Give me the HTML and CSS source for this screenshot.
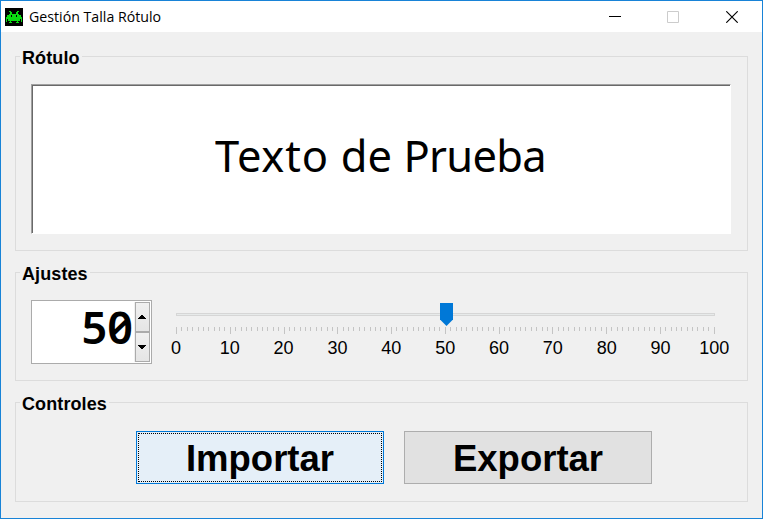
FILE: index.html
```html
<!DOCTYPE html>
<html lang="es">
<head>
<meta charset="utf-8">
<title>Gestión Talla Rótulo</title>
<link rel="stylesheet" href="styles.css">
</head>
<body>
<div class="window">
  <header class="titlebar">
    <svg class="app-icon" width="18" height="18" viewBox="0 0 18 18" shape-rendering="crispEdges">
      <rect width="18" height="18" fill="#000"/>
      <path fill="#0bdc12" d="M4 3h2v1h1v2h4V4h1V3h2v1h-1v2h1v1h2v2h1v5h-1v-3h-1v2h-2v1h1v1h-3v-1h1v-1H6v1h1v1H4v-1h1v-1H3v-2H2v3H1V9h1V7h2V6h1V4H4z"/>
      <path fill="#000" d="M6 7h1v2H6zM11 7h1v2h-1z"/>
    </svg>
    <span class="title">Gestión Talla Rótulo</span>
    <nav class="window-buttons">
      <svg width="12" height="12" viewBox="0 0 12 12"><path d="M0 5.5h12" stroke="#000"/></svg>
      <svg width="12" height="12" viewBox="0 0 12 12"><path d="M.5.5h11v11H.5z" fill="none" stroke="#ccc"/></svg>
      <svg class="close" width="12" height="12" viewBox="0 0 12 12"><path d="M.3.3l11.4 11.4M11.7.3L.3 11.7" stroke="#000" stroke-width="1.15"/></svg>
    </nav>
  </header>
  <main class="content">
    <section class="group group-label">
      <h2>Rótulo</h2>
      <div class="display"><span><span class="loose">Texto </span>de <span class="tight">Prueba</span></span></div>
    </section>
    <section class="group group-settings">
      <h2>Ajustes</h2>
      <div class="settings">
        <div class="spin">
          <span class="spin-value">50</span>
          <div class="spin-buttons">
            <button type="button"><svg width="8" height="4" viewBox="0 0 8 4" shape-rendering="crispEdges"><path d="M3 0h2v1h1v1h1v1h1v1H0V3h1V2h1V1h1z"/></svg></button>
            <button type="button"><svg width="8" height="4" viewBox="0 0 8 4" shape-rendering="crispEdges"><path d="M0 0h8v1H7v1H6v1H5v1H3V3H2V2H1V1H0z"/></svg></button>
          </div>
        </div>
        <div class="slider">
          <div class="track"><svg class="thumb" width="13" height="23" viewBox="0 0 13 23"><path d="M0 0h13v16.5L6.5 23 0 16.5z" fill="#0078d7"/></svg></div>
          <div class="ticks" id="ticks"></div>
          <div class="labels"><span>0</span><span>10</span><span>20</span><span>30</span><span>40</span><span>50</span><span>60</span><span>70</span><span>80</span><span>90</span><span>100</span></div>
        </div>
      </div>
    </section>
    <section class="group group-controls">
      <h2>Controles</h2>
      <div class="actions">
        <button type="button" class="action focused"><span>Importar</span></button>
        <button type="button" class="action"><span>Exportar</span></button>
      </div>
    </section>
  </main>
</div>
<script src="ticks.js"></script>
</body>
</html>
```
FILE: styles.css
```css
* { box-sizing: border-box; }
body { margin: 0; font-family: "Liberation Sans", Arial, sans-serif; color: #000; }
svg { display: block; }
.window { width: 763px; height: 519px; border: 1px solid #1883d7; background: #f0f0f0; overflow: hidden; }
.titlebar { height: 31px; background: #fff; display: flex; align-items: center; padding: 0 25px 0 4px; }
.title { font: 15px/20px "Open Sans", sans-serif; margin: 0 0 2px 6px; white-space: nowrap; transform: scaleX(.945); transform-origin: left; }
.window-buttons { display: flex; gap: 46px; margin-left: auto; }
.close { margin: 0 -1px 0 1px; }
.content { padding: 24px 14px 0; }
.group { border: 1px solid #dcdcdc; padding: 0 15px; margin-bottom: 21px; }
.group h2 { font-size: 18px; line-height: 22px; height: 20px; margin: -10px 0 0 -11px; padding: 0 2px; width: max-content; background: #f0f0f0; letter-spacing: .1px; }
.group-label { height: 195px; }
.group-settings { height: 109px; }
.group-controls { height: 100px; }
.display { margin-top: 17px; height: 150px; width: 700px; background: #fff; border: 1px solid; border-color: #a0a0a0 #fff #fff #a0a0a0; box-shadow: inset 1px 1px #696969; display: flex; align-items: center; justify-content: center; padding-bottom: 8px; }
.display > span { font: 44px/60px "Noto Sans", sans-serif; white-space: pre; transform: scaleX(.988); }
.loose { letter-spacing: .8px; }
.tight { letter-spacing: -.7px; }
.settings { display: flex; margin-top: 18px; }
.spin { width: 121px; height: 64px; margin-top: -1px; background: #fff; border: 1px solid #ababab; display: flex; justify-content: flex-end; padding: 1px; }
.spin-value { font: 600 45px/50px "Noto Sans", sans-serif; font-feature-settings: "zero"; }
.spin-buttons { width: 16px; display: flex; flex-direction: column; background: #f0f0f0; padding-left: 1px; margin-left: 1px; }
.spin-buttons button { flex: 1; border: 1px solid #ababab; padding: 0 1px 0 0; display: flex; align-items: center; justify-content: center; background: linear-gradient(#f0f0f0, #e5e5e5); }
.slider { width: 539px; margin-left: 24px; padding-top: 12px; }
.track { height: 3px; border: 1px solid #d6d6d6; background: #e7eaea; position: relative; }
.thumb { position: absolute; left: 263px; top: -11px; }
.ticks { display: flex; justify-content: space-between; height: 7px; margin-top: 11px; }
.ticks i { width: 1px; height: 4px; background: #c4c4c4; }
.ticks .major { height: 7px; }
.labels { display: grid; grid-template-columns: repeat(11, 53.85px); margin: 4px 0 0 -27px; width: 593px; font-size: 18px; line-height: 20px; text-align: center; }
.actions { display: flex; gap: 20px; margin: 18px 0 0 105px; }
.action { width: 248px; height: 53px; padding: 2px 0 0; border: 1px solid #adadad; background: #e1e1e1; color: #000; font: bold 36.5px/49px "Liberation Sans", Arial, sans-serif; }
.focused { border-color: #0078d7; background: #e5eff8; padding: 1px; }
.focused span { display: block; height: 49px; line-height: 49px; border: 1px dotted #000; }
```
FILE: ticks.js
```js
const ticks = document.getElementById('ticks');
for (let n = 0; n <= 100; n++) {
  const mark = document.createElement('i');
  if (n % 10 === 0) mark.className = 'major';
  ticks.appendChild(mark);
}
```
